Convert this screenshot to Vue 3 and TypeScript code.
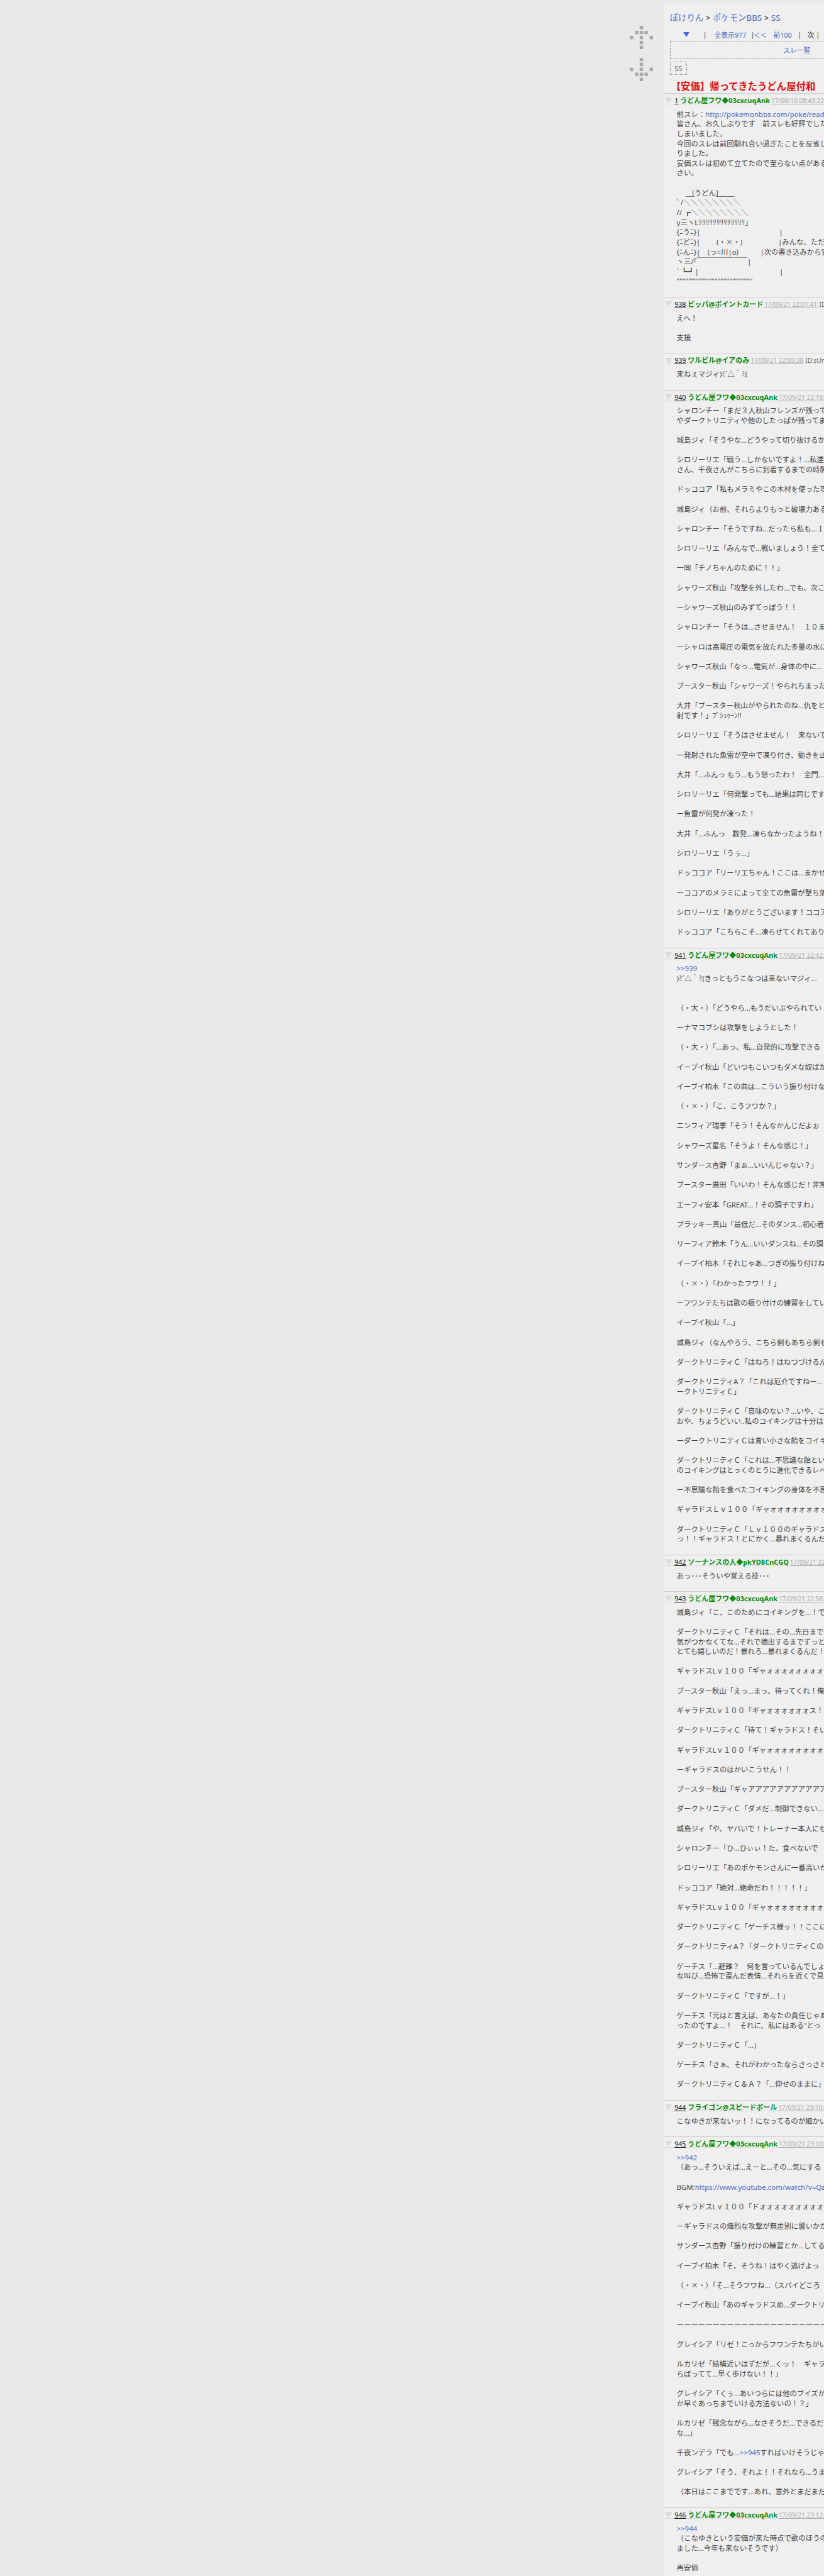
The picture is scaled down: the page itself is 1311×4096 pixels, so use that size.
<script setup lang="ts">
interface Post {
  no: number
  name: string
  date: string
  id?: string
  lines: string[]
}

// squares of the up arrow, the down arrow is the same one flipped
const arrowCells: [number, number][] = [
  [2, 0],
  [1, 1], [2, 1], [3, 1],
  [0, 2], [2, 2], [4, 2],
  [2, 3],
  [2, 4],
]
const cellX = [0, 12, 23, 34, 46]

const udon = 'うどん屋フワ◆03cxcuqAnk'

const posts: Post[] = [
  {
    no: 1, name: udon, date: '17/08/10 08:43:22',
    lines: [
      '前スレ：http://pokemonbbs.com/poke/read.cgi/ss',
      '皆さん、お久しぶりです　前スレも好評でした',
      'しまいました。',
      '今回のスレは前回馴れ合い過ぎたことを反省し',
      'りました。',
      '安価スレは初めて立てたので至らない点があるかも',
      'さい。',
      '',
      '　 __[うどん]_____',
      '` /＼＼＼＼＼＼＼＼',
      '// ┏＼＼＼＼＼＼＼＼',
      'γ三ヽLﾘﾘﾘﾘﾘﾘﾘﾘﾘﾘﾘﾘﾘ｣',
      '{ﾆうﾆ}|　　　　　　　　　　　|',
      '{ﾆどﾆ}|　　 (・×・)　　　　　|みんな、ただいま',
      '{ﾆんﾆ}|　(っ=川|o)　　　|次の書き込みから安価',
      'ヽ三/｢￣￣￣￣￣￣￣|',
      '` ┗┛|　　　　　　　　　　　 |',
      '""""""""""""""""""""""""""',
    ],
  },
  { no: 938, name: 'ビッパ@ポイントカード', date: '17/09/21 22:01:41', id: 'ID:sUn', lines: ['えへ！', '', '支援'] },
  { no: 939, name: 'ワルビル@イアのみ', date: '17/09/21 22:05:38', id: 'ID:sUn', lines: ['来ねぇマジィ)ﾐ´△｀ﾐ('] },
  {
    no: 940, name: udon, date: '17/09/21 22:18:05',
    lines: [
      'シャロンチー「まだ３人秋山フレンズが残って',
      'やダークトリニティや他のしたっぱが残ってま',
      '',
      '城島ジィ「そうやな…どうやって切り抜けるか',
      '',
      'シロリーリエ「戦う…しかないですよ！…私達',
      'さん、千夜さんがこちらに到着するまでの時間',
      '',
      'ドッココア「私もメラミやこの木材を使った攻',
      '',
      '城島ジィ（お前、それらよりもっと破壊力ある',
      '',
      'シャロンチー「そうですね…だったら私も…１',
      '',
      'シロリーリエ「みんなで…戦いましょう！全て',
      '',
      '一同「チノちゃんのために！！」',
      '',
      'シャワーズ秋山「攻撃を外したわ…でも、次こ',
      '',
      'ーシャワーズ秋山のみずてっぽう！！',
      '',
      'シャロンチー「そうは…させません！　１０ま',
      '',
      'ーシャロは高電圧の電気を放たれた多量の水に',
      '',
      'シャワーズ秋山「なっ…電気が…身体の中に…',
      '',
      'ブースター秋山「シャワーズ！やられちまった',
      '',
      '大井「ブースター秋山がやられたのね…仇をと',
      '射です！」ﾌﾟｼｭｩｰﾝ!!',
      '',
      'シロリーリエ「そうはさせません！　来ないで',
      '',
      '一発射された魚雷が空中で凍り付き、動きを止',
      '',
      '大井「…ふんっ もう…もう怒ったわ！　全門…',
      '',
      'シロリーリエ「何発撃っても…結果は同じです',
      '',
      'ー魚雷が何発か凍った！',
      '',
      '大井「…ふんっ　数発…凍らなかったようね！',
      '',
      'シロリーリエ「うぅ…」',
      '',
      'ドッココア「リーリエちゃん！ここは…まかせ',
      '',
      'ーココアのメラミによって全ての魚雷が撃ち落',
      '',
      'シロリーリエ「ありがとうございます！ココア',
      '',
      'ドッココア「こちらこそ…凍らせてくれてあり',
    ],
  },
  {
    no: 941, name: udon, date: '17/09/21 22:42:11',
    lines: [
      '>>939',
      ')ﾐ´△｀ﾐ(きっともうこなつは来ないマジィ…',
      '',
      '',
      '（・大・）「どうやら…もうだいぶやられてい',
      '',
      'ーナマコブシは攻撃をしようとした！',
      '',
      '（・大・）「…あっ、私…自発的に攻撃できる',
      '',
      'イーブイ秋山「どいつもこいつもダメな奴ばか',
      '',
      'イーブイ柏木「この曲は…こういう振り付けな',
      '',
      '（・×・）「こ、こうフワか？」',
      '',
      'ニンフィア瑞季「そう！そんなかんじだよぉ',
      '',
      'シャワーズ星名「そうよ！そんな感じ！」',
      '',
      'サンダース杏野「まぁ…いいんじゃない？」',
      '',
      'ブースター廣田「いいわ！そんな感じだ！非常',
      '',
      'エーフィ安本「GREAT…！その調子ですわ」',
      '',
      'ブラッキー真山「最低だ…そのダンス…初心者',
      '',
      'リーフィア鈴木「うん…いいダンスね…その調',
      '',
      'イーブイ柏木「それじゃあ…つぎの振り付けね',
      '',
      '（・×・）「わかったフワ！！」',
      '',
      'ーフワンテたちは歌の振り付けの練習をしてい',
      '',
      'イーブイ秋山「…」',
      '',
      '城島ジィ（なんやろう、こちら側もあちら側も',
      '',
      'ダークトリニティＣ「はねろ！はねつづけるん',
      '',
      'ダークトリニティA？「これは厄介ですねー…',
      'ークトリニティＣ」',
      '',
      'ダークトリニティＣ「意味のない？…いや、こ',
      'おや、ちょうどいい..私のコイキングは十分は',
      '',
      'ーダークトリニティＣは青い小さな飴をコイキ',
      '',
      'ダークトリニティＣ「これは…不思議な飴とい',
      'のコイキングはとっくのとうに進化できるレベ',
      '',
      'ー不思議な飴を食べたコイキングの身体を不思',
      '',
      'ギャラドスＬｖ１００「ギャォォォォォォォォ',
      '',
      'ダークトリニティＣ「Ｌｖ１００のギャラドス',
      'っ！！ギャラドス！とにかく…暴れまくるんだ',
    ],
  },
  { no: 942, name: 'ソーナンスの人◆pkYD8CnCGQ', date: '17/09/21 22:50:33', lines: ['あっ･･･そういや覚える技･･･'] },
  {
    no: 943, name: udon, date: '17/09/21 22:58:40',
    lines: [
      '城島ジィ「こ、このためにコイキングを…！で',
      '',
      'ダークトリニティＣ「それは…その…先日まで',
      '気がつかなくてな…それで摘出するまでずっと',
      'とても嬉しいのだ！暴れろ…暴れまくるんだ！',
      '',
      'ギャラドスLｖ１００「ギャォォォォォォォォォ',
      '',
      'ブースター秋山「えっ…まっ、待ってくれ！俺',
      '',
      'ギャラドスLｖ１００「ギャォォォォォォス！',
      '',
      'ダークトリニティＣ「待て！ギャラドス！そい',
      '',
      'ギャラドスLｖ１００「ギャォォォォォォォォォ',
      '',
      'ーギャラドスのはかいこうせん！！',
      '',
      'ブースター秋山「ギャアアアアアアアアアアア',
      '',
      'ダークトリニティＣ「ダメだ…制御できない…',
      '',
      '城島ジィ「や、ヤバいで！トレーナー本人にも',
      '',
      'シャロンチー「ひ…ひぃぃ！た、食べないで',
      '',
      'シロリーリエ「あのポケモンさんに一番高いか',
      '',
      'ドッココア「絶対…絶命だわ！！！！！」',
      '',
      'ギャラドスLｖ１００「ギャォォォォォォォォォ',
      '',
      'ダークトリニティＣ「ゲーチス様ッ！！ここに',
      '',
      'ダークトリニティA？「ダークトリニティＣの',
      '',
      'ゲーチス「…避難？　何を言っているんでしょ',
      'な叫び…恐怖で歪んだ表情…それらを近くで見',
      '',
      'ダークトリニティＣ「ですが…！」',
      '',
      'ゲーチス「元はと言えば、あなたの責任じゃあ',
      'ったのですよ…！　それに、私にはある"とっ',
      '',
      'ダークトリニティＣ「…」',
      '',
      'ゲーチス「さぁ、それがわかったならさっさと',
      '',
      'ダークトリニティＣ＆Ａ？「…仰せのままに」',
    ],
  },
  { no: 944, name: 'フライゴン@スピードボール', date: '17/09/21 23:10:02', lines: ['こなゆきが来ないッ！！になってるのが細かい'] },
  {
    no: 945, name: udon, date: '17/09/21 23:10:47',
    lines: [
      '>>942',
      '（あっ…そういえば…えーと…その…気にする',
      '',
      'BGM:https://www.youtube.com/watch?v=Qz',
      '',
      'ギャラドスLｖ１００「ドォォォォォォォォォス',
      '',
      'ーギャラドスの熾烈な攻撃が無差別に襲いかか',
      '',
      'サンダース杏野「振り付けの練習とか…してる',
      '',
      'イーブイ柏木「そ、そうね！はやく逃げよっ',
      '',
      '（・×・）「そ…そうフワね…（スパイどころ',
      '',
      'イーブイ秋山「あのギャラドスめ…ダークトリ',
      '',
      'ーーーーーーーーーーーーーーーーーーーーーー',
      '',
      'グレイシア「リゼ！こっからフワンテたちがい',
      '',
      'ルカリゼ「結構近いはずだが…くっ！　ギャラ',
      'らばってて…早く歩けない！！」',
      '',
      'グレイシア「くぅ…あいつらには他のブイズが',
      'か早くあっちまでいける方法ないの！？」',
      '',
      'ルカリゼ「残念ながら…なさそうだ…できるだ',
      'な…」',
      '',
      '千夜ンデラ「でも…>>945すればいけそうじゃ',
      '',
      'グレイシア「そう、それよ！！それなら…うま',
      '',
      '（本日はここまでです…あれ、意外とまだまだ',
    ],
  },
  {
    no: 946, name: udon, date: '17/09/21 23:12:30',
    lines: [
      '>>944',
      '（こなゆきという安価が来た時点で歌のほうの',
      'ました…今年も来ないそうです）',
      '',
      '再安価',
    ],
  },
]

const tokenPattern = /(>>\d+|https?:\/\/\S*?(?=[^\x21-\x7e]|$)|×)/

function parts(line: string) {
  return line.split(tokenPattern).map((text, i) => ({
    text,
    kind: i % 2 === 0 ? 'text' : text === '×' ? 'wide' : 'link',
  }))
}
</script>

<template>
  <div class="page">
    <aside class="side">
      <svg v-for="dir in ['up', 'down']" :key="dir" class="arrow" :class="dir" viewBox="0 0 54 54">
        <rect v-for="[x, y] in arrowCells" :key="`${x}-${y}`" :x="cellX[x]" :y="y * 11.6" width="8" height="8" />
      </svg>
    </aside>

    <main class="panel">
      <header class="top">
        <div class="crumbs">
          <a>ぽけりん</a> &gt; <a>ポケモンBBS</a> &gt; <a>SS</a>
        </div>
        <nav class="nav">
          <svg class="down-btn" viewBox="0 0 10 8"><polygon points="0,0 10,0 5,8" /></svg>
          <span class="bar b1">|</span>
          <a class="all">全表示977</a>
          <span class="bar b2">|</span>
          <a class="first">＜＜</a>
          <a class="prev">前100</a>
          <span class="bar b3">|</span>
          <span class="next">次</span>
          <span class="bar b4">|</span>
        </nav>
        <div class="thread-list"><a>スレ一覧</a></div>
        <div class="board-tag">SS</div>
        <h1 class="title">【安価】帰ってきたうどん屋付和</h1>
      </header>

      <article v-for="post in posts" :key="post.no" class="post">
        <div class="post-head">
          <svg class="fold" viewBox="0 0 12 10"><polygon points="0,0 12,0 6,10" /></svg>
          <span class="no">{{ post.no }}</span>
          <b class="name">{{ post.name }}</b>
          <span class="date">{{ post.date }}</span>
          <span v-if="post.id" class="uid">{{ post.id }}</span>
        </div>
        <div class="post-body">
          <div v-for="(line, i) in post.lines" :key="i" class="line">
            <template v-for="(part, j) in parts(line)" :key="j"><a v-if="part.kind === 'link'">{{ part.text }}</a><span v-else-if="part.kind === 'wide'" class="wide">{{ part.text }}</span><template v-else>{{ part.text }}</template></template>
          </div>
        </div>
      </article>
    </main>
  </div>
</template>

<style>
html,
body {
  margin: 0;
  background: #e9e9e9;
  overflow: hidden;
}
</style>

<style scoped>
.page {
  display: flex;
  width: 1311px;
  height: 4096px;
  overflow: hidden;
  padding-top: 5.5px;
  box-sizing: border-box;
  font-family: "Noto Sans", "Noto Sans CJK JP", sans-serif;
  color: #444;
}

.side {
  flex: 0 0 1055.5px;
  position: relative;
}

.arrow {
  position: absolute;
  left: 1002px;
  width: 37px;
  height: 37px;
  fill: #aaa;
}

.arrow.up {
  top: 35px;
}

.arrow.down {
  top: 86.5px;
  transform: scaleY(-1);
}

.panel {
  flex: 0 0 600px;
  background: #efefef;
}

a {
  color: #4a6bc4;
}

.wide {
  font-family: "Noto Sans CJK JP", sans-serif;
}

.top {
  padding: 13.5px 0 0 10.2px;
  height: 142.5px;
  box-sizing: border-box;
}

.crumbs {
  font-size: 13.4px;
  line-height: 18px;
  color: #111;
}

.nav {
  display: flex;
  align-items: center;
  height: 16px;
  margin-top: 9.6px;
  font-size: 10.8px;
  color: #222;
  white-space: nowrap;
}

.down-btn {
  width: 10px;
  height: 8px;
  margin-left: 21.8px;
  fill: #4169e1;
}

.bar {
  width: 3px;
  text-align: center;
  color: #444;
}

.b1 {
  margin-left: 21px;
}

.all {
  margin-left: 15px;
}

.b2 {
  margin-left: 7px;
}

.first {
  margin-left: 1.4px;
}

.prev {
  margin-left: 10px;
}

.b3 {
  margin-left: 9.6px;
}

.next {
  margin-left: 12.2px;
}

.b4 {
  margin-left: 3px;
}

.thread-list {
  width: 404px;
  height: 28px;
  box-sizing: border-box;
  margin-top: 3px;
  border: 1px dashed #999;
  font-size: 10.8px;
  line-height: 26px;
  text-align: center;
}

.board-tag {
  width: 27.3px;
  height: 21px;
  box-sizing: border-box;
  margin-top: 4.8px;
  border: 1px dotted #888;
  font-size: 11px;
  line-height: 19px;
  text-align: center;
  color: #666;
}

.title {
  margin: 8.7px 0 0 2px;
  font-size: 15.4px;
  line-height: 20px;
  font-weight: 700;
  color: #e01010;
  white-space: nowrap;
}

.post {
  border-top: 1px solid #ccc;
}

.post-head {
  display: flex;
  align-items: baseline;
  height: 17px;
  box-sizing: border-box;
  padding: 6px 0 0 2.7px;
  border-bottom: 1px solid #ddd;
  line-height: 10px;
  white-space: nowrap;
}

.fold {
  align-self: flex-end;
  flex: none;
  width: 11.6px;
  height: 9.6px;
  margin-right: 3.4px;
  fill: #dcdcdc;
}

.no {
  font-size: 10.6px;
  color: #111;
  text-decoration: underline;
}

.name {
  margin-left: 3px;
  font-size: 11px;
  font-weight: 700;
  color: #0a8a0a;
}

.date {
  margin-left: 2px;
  font-size: 10px;
  color: #aaa;
  text-decoration: underline;
}

.uid {
  margin-left: 3px;
  font-size: 10px;
  color: #666;
}

.post-body {
  padding: 7.6px 0 16.9px 21.1px;
}

.line {
  height: 15.65px;
  font-size: 11.4px;
  line-height: 15.65px;
  white-space: pre;
}
</style>
